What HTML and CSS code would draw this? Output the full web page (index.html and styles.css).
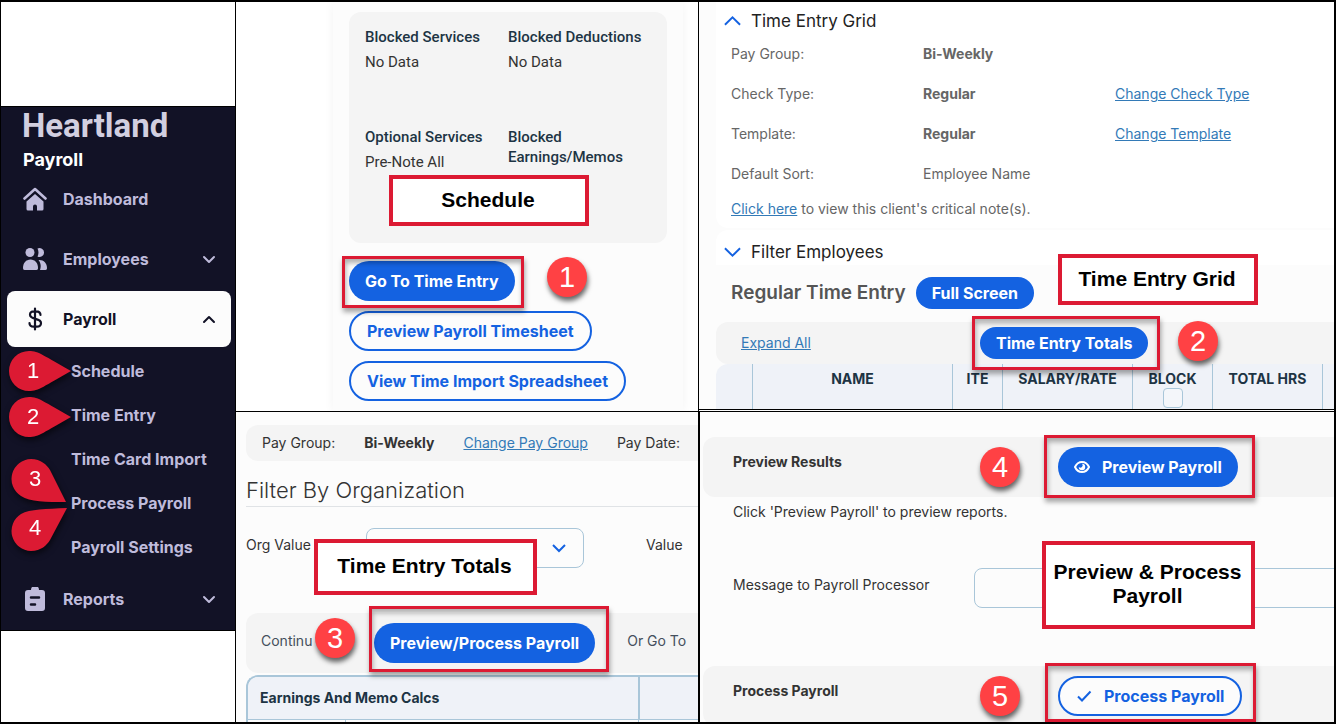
FILE: index.html
```html
<!DOCTYPE html>
<html lang="en">
<head>
    <meta charset="UTF-8">
    <meta name="viewport" content="width=device-width, initial-scale=1.0">
    <title>Heartland Payroll</title>
    <link rel="stylesheet" href="styles.css">
</head>
<body>
    <div class="page">
        <aside class="sidebar">
            <nav class="nav">
                <div class="brand">Heartland</div>
                <div class="product">Payroll</div>
                <ul class="menu">
                    <li>
                        <a class="menu-item" href="#">
                            <svg class="icon" viewBox="0 0 24 24"><path d="M1.500 11.500 12 2l10.500 9.500" fill="none" stroke="currentColor" stroke-width="2.600" stroke-linecap="round" stroke-linejoin="round"/><path d="M12 7 20.500 14.500v7.500a1.500 1.500 0 0 1-1.500 1.500h-5v-4a2 2 0 0 0-4 0v4H5a1.500 1.500 0 0 1-1.500-1.500v-7.500z" fill="currentColor"/></svg>
                            <span>Dashboard</span>
                        </a>
                    </li>
                    <li>
                        <a class="menu-item" href="#">
                            <svg class="icon" viewBox="0 0 24 24"><g fill="currentColor"><circle cx="7" cy="5.500" r="4.500"/><path d="M0 21c0-5 3-8.500 7.500-8.500S15 16 15 21c0 1-.5 2-1.500 2h-12C.5 23 0 22 0 21z"/><path d="M14.500 1.500A4.500 4.500 0 1 1 14.500 9.500C15.800 7 15.800 4 14.500 1.500z"/><path d="M15.500 13c5-.5 8.500 3 8.500 8 0 1-.5 2-1.500 2H17c1.500-4 .5-7.500-1.500-10z"/></g></svg>
                            <span>Employees</span>
                            <svg class="arrow" viewBox="0 0 20 20"><path d="M5 8l5 5 5-5"/></svg>
                        </a>
                    </li>
                    <li>
                        <a class="menu-item active" href="#">
                            <svg class="icon" viewBox="0 0 24 24"><path d="M12 1.500v21M17.500 8c0-2.500-2-3.700-4.500-3.700h-2C8.500 4.300 7 5.800 7 7.800c0 5.400 11 2.700 11 8.200 0 2.200-1.700 3.700-4.300 3.700h-2.900C8.200 19.700 6.500 18.200 6.500 16" fill="none" stroke="currentColor" stroke-width="2.200" stroke-linecap="round"/></svg>
                            <span>Payroll</span>
                            <svg class="arrow" viewBox="0 0 20 20"><path d="M5 13l5-5 5 5"/></svg>
                        </a>
                        <ul class="submenu">
                            <li>
                                <a href="#">Schedule</a>
                                <div class="pin pin-1"><svg viewBox="0 0 62 40"><path d="M20 0C30 0 35 5 62 20 35 35 30 40 20 40A20 20 0 0 1 20 0z"/></svg><span>1</span></div>
                            </li>
                            <li>
                                <a href="#">Time Entry</a>
                                <div class="pin pin-2"><svg viewBox="0 0 62 40"><path d="M20 0C30 0 35 5 62 20 35 35 30 40 20 40A20 20 0 0 1 20 0z"/></svg><span>2</span></div>
                            </li>
                            <li><a href="#">Time Card Import</a></li>
                            <li>
                                <a href="#">Process Payroll</a>
                                <div class="pin pin-3"><svg viewBox="0 0 56 44"><path d="M20 0C30 0 36 6 39 11L55 43C35 43 19 43 10 37A20 20 0 0 1 20 0z"/></svg><span>3</span></div>
                                <div class="pin pin-4"><svg viewBox="0 0 56 44"><path d="M20 43C30 43 36 37 39 32L56 0C35 1 19 1 10 6A20 20 0 0 0 20 43z"/></svg><span>4</span></div>
                            </li>
                            <li><a href="#">Payroll Settings</a></li>
                        </ul>
                    </li>
                    <li>
                        <a class="menu-item" href="#">
                            <svg class="icon" viewBox="0 0 24 24"><path d="M5 3h3a4 4 0 0 1 8 0h3a3 3 0 0 1 3 3v15a3 3 0 0 1-3 3H5a3 3 0 0 1-3-3V6a3 3 0 0 1 3-3z" fill="currentColor"/><path d="M8 10.500h8M8 17.500h4" stroke="#121226" stroke-width="2.500" stroke-linecap="round"/></svg>
                            <span>Reports</span>
                            <svg class="arrow" viewBox="0 0 20 20"><path d="M5 8l5 5 5-5"/></svg>
                        </a>
                    </li>
                </ul>
            </nav>
        </aside>

        <section class="panel schedule">
            <div class="schedule-card">
                <div class="services">
                    <div>
                        <h4>Blocked Services</h4>
                        <p>No Data</p>
                    </div>
                    <div>
                        <h4>Blocked Deductions</h4>
                        <p>No Data</p>
                    </div>
                    <div>
                        <h4>Optional Services</h4>
                        <p>Pre-Note All</p>
                    </div>
                    <div>
                        <h4>Blocked Earnings/Memos</h4>
                    </div>
                </div>
                <div class="step step-1">
                    <button class="btn">Go To Time Entry</button>
                    <div class="frame"></div>
                    <div class="badge">1</div>
                </div>
                <button class="btn outline">Preview Payroll Timesheet</button>
                <button class="btn outline">View Time Import Spreadsheet</button>
            </div>
            <div class="label label-schedule">Schedule</div>
        </section>

        <section class="panel entry">
            <div class="entry-card">
                <h3 class="toggle"><svg viewBox="0 0 18 12"><path d="M1 10l8-8 8 8"/></svg>Time Entry Grid</h3>
                <div class="details">
                    <span>Pay Group:</span><b>Bi-Weekly</b><span></span>
                    <span>Check Type:</span><b>Regular</b><a href="#">Change Check Type</a>
                    <span>Template:</span><b>Regular</b><a href="#">Change Template</a>
                    <span>Default Sort:</span><span>Employee Name</span><span></span>
                </div>
                <p class="note"><a href="#">Click here</a> to view this client's critical note(s).</p>
            </div>
            <div class="entry-card filter">
                <h3 class="toggle"><svg viewBox="0 0 18 12"><path d="M1 2l8 8 8-8"/></svg>Filter Employees</h3>
            </div>
            <div class="entry-title">
                <h2>Regular Time Entry</h2>
                <button class="btn small">Full Screen</button>
            </div>
            <div class="entry-bar">
                <a href="#">Expand All</a>
                <div class="step step-2">
                    <button class="btn small">Time Entry Totals</button>
                    <div class="frame"></div>
                    <div class="badge">2</div>
                </div>
            </div>
            <table class="grid">
                <colgroup>
                    <col class="c-mark"><col class="c-name"><col class="c-ite"><col class="c-rate"><col class="c-block"><col class="c-hrs"><col>
                </colgroup>
                <thead>
                    <tr>
                        <th></th>
                        <th>NAME</th>
                        <th>ITE</th>
                        <th>SALARY/RATE</th>
                        <th><label for="block">BLOCK</label><input type="checkbox" id="block"></th>
                        <th>TOTAL HRS</th>
                        <th></th>
                    </tr>
                </thead>
            </table>
            <div class="label label-entry">Time Entry Grid</div>
        </section>

        <section class="panel totals">
            <div class="group-bar">
                <span>Pay Group:</span>
                <b>Bi-Weekly</b>
                <a href="#">Change Pay Group</a>
                <span>Pay Date:</span>
            </div>
            <h2 class="filter-title">Filter By Organization</h2>
            <div class="org-row">
                <label for="org">Org Value</label>
                <div class="select">
                    <select id="org"><option></option></select>
                    <svg viewBox="0 0 14 10"><path d="M1 1l6 6 6-6"/></svg>
                </div>
                <span>Value</span>
            </div>
            <div class="continue-bar">
                <span>Continu</span>
                <div class="step step-3">
                    <button class="btn">Preview/Process Payroll</button>
                    <div class="frame"></div>
                    <div class="badge">3</div>
                </div>
                <span>Or Go To</span>
            </div>
            <table class="calcs">
                <colgroup>
                    <col class="c-code"><col class="c-calc"><col>
                </colgroup>
                <tr>
                    <th colspan="2">Earnings And Memo Calcs</th>
                    <th></th>
                </tr>
                <tr>
                    <td></td>
                    <td></td>
                    <td></td>
                </tr>
            </table>
            <div class="label label-totals">Time Entry Totals</div>
        </section>

        <section class="panel process">
            <div class="process-bar">
                <h4>Preview Results</h4>
                <div class="step step-4">
                    <button class="btn"><svg viewBox="0 0 16 16"><path d="M1 8c1.500-3.300 4-5 7-5s5.500 1.700 7 5c-1.500 3.300-4 5-7 5s-5.500-1.700-7-5z" fill="none" stroke="currentColor" stroke-width="2"/><path d="M8 4.800A3.200 3.200 0 1 1 4.800 8 2 2 0 0 0 8 4.800z" fill="currentColor"/></svg>Preview Payroll</button>
                    <div class="frame"></div>
                    <div class="badge">4</div>
                </div>
            </div>
            <p class="hint">Click 'Preview Payroll' to preview reports.</p>
            <div class="message">
                <label for="message">Message to Payroll Processor</label>
                <input type="text" id="message">
            </div>
            <div class="process-bar">
                <h4>Process Payroll</h4>
                <div class="step step-5">
                    <button class="btn outline"><svg viewBox="0 0 16 16"><path d="M2 8.500l4 4 8.500-9" fill="none" stroke="currentColor" stroke-width="2"/></svg>Process Payroll</button>
                    <div class="frame"></div>
                    <div class="badge">5</div>
                </div>
            </div>
            <div class="label label-process">Preview &amp; Process Payroll</div>
        </section>
    </div>
</body>
</html>
```
FILE: styles.css
```css
* {
    box-sizing: border-box;
}
body {
    margin: 0;
    font-family: Inter, "Liberation Sans", sans-serif;
    font-size: 14px;
    line-height: 20px;
    color: #333;
    background: #fff;
}
h2, h3, h4, p, ul {
    margin: 0;
    padding: 0;
}
ul {
    list-style: none;
}
a {
    color: #337ab7;
}
.page {
    display: grid;
    grid-template-columns: 235px 462px minmax(0, 1fr);
    grid-template-rows: auto minmax(0, 1fr);
    height: 100vh;
    border: 2px solid #000;
    border-left-width: 1px;
    overflow: hidden;
}
.panel {
    position: relative;
    overflow: hidden;
    background: #fcfcfc;
}

/* sidebar */
.sidebar {
    grid-row: 1 / 3;
    padding-top: 104px;
    border-right: 1px solid #000;
}
.nav {
    padding: 5px 4px 3px 6px;
    background: #121226;
    border-top: 1px solid #000;
    border-bottom: 1px solid #000;
}
.brand {
    padding-left: 15px;
    font-family: Roboto, sans-serif;
    font-size: 33px;
    font-weight: 700;
    line-height: 28px;
    color: #d2cfe0;
}
.product {
    padding: 9px 0 0 16px;
    font-size: 18px;
    font-weight: 700;
    line-height: 22px;
    color: #fff;
}
.menu {
    display: flex;
    flex-direction: column;
    gap: 4px;
}
.menu-item {
    display: flex;
    align-items: center;
    gap: 16px;
    height: 56px;
    padding: 0 12px 0 16px;
    border-radius: 8px;
    font-size: 16px;
    font-weight: 700;
    color: #bfbbdb;
    text-decoration: none;
}
.menu-item.active {
    background: #fcfcfc;
    color: #121226;
}
.icon {
    width: 24px;
    height: 24px;
}
.arrow {
    width: 20px;
    height: 20px;
    margin-left: auto;
}
.arrow path {
    fill: none;
    stroke: currentColor;
    stroke-width: 2;
    stroke-linecap: round;
    stroke-linejoin: round;
}
.submenu {
    margin-bottom: -2px;
    padding: 2px 0 0;
}
.submenu li {
    position: relative;
    padding-left: 64px;
}
.submenu a {
    display: block;
    font-size: 16px;
    font-weight: 700;
    line-height: 44px;
    color: #bfbbdb;
    text-decoration: none;
}
.pin {
    position: absolute;
    left: 2px;
    width: 62px;
    height: 40px;
    filter: drop-shadow(1px 3px 3px rgba(0, 0, 0, 0.6));
}
.pin svg {
    display: block;
    width: 100%;
    height: 100%;
    fill: #dc1a33;
}
.pin span {
    position: absolute;
    left: 0;
    top: 0;
    width: 48px;
    font-family: "Liberation Sans", sans-serif;
    font-size: 22px;
    line-height: 40px;
    text-align: center;
    color: #fff;
}
.pin-1 {
    top: 2px;
}
.pin-2 {
    top: 4px;
}
.pin-3, .pin-4 {
    left: 4px;
    width: 56px;
    height: 44px;
}
.pin-3 {
    top: -22px;
}
.pin-4 {
    top: 27px;
}

/* callouts */
.step {
    position: relative;
}
.frame {
    position: absolute;
    border: 3px solid #dc1a33;
    box-shadow: 1px 4px 5px rgba(0, 0, 0, 0.35), inset 1px 4px 5px rgba(0, 0, 0, 0.3);
    pointer-events: none;
}
.badge {
    position: absolute;
    width: 40px;
    height: 40px;
    border-radius: 50%;
    background: #ff4144;
    box-shadow: 1px 4px 5px rgba(0, 0, 0, 0.6);
    font-family: "Liberation Sans", sans-serif;
    font-size: 29px;
    line-height: 40px;
    text-align: center;
    color: #fff;
}
.label {
    position: absolute;
    display: flex;
    align-items: center;
    justify-content: center;
    padding: 0 2px 2px 0;
    border: 4px solid #dc1a33;
    background: #fff;
    font-family: "Liberation Sans", sans-serif;
    font-size: 21px;
    font-weight: 700;
    line-height: 24px;
    text-align: center;
    color: #000;
}
.step-1 .frame {
    inset: -5px -9px -7px -7px;
}
.step-1 .badge {
    left: 198px;
    top: -4px;
}
.step-2 .frame {
    inset: -11px -12px -11px -8px;
}
.step-2 .badge {
    left: 198px;
    top: -6px;
}
.step-3 .frame {
    inset: -17px -14px -9px -5px;
}
.step-3 .badge {
    left: -59px;
    top: -5px;
}
.step-4 .frame {
    inset: -12px -17px -11px -14px;
}
.step-5 .frame {
    inset: -13px -14px -6px -13px;
}
.step-4 .badge, .step-5 .badge {
    left: -78px;
    top: 0;
}
.label-schedule {
    left: 153px;
    top: 173px;
    width: 200px;
    height: 51px;
}
.label-entry {
    left: 359px;
    top: 252px;
    width: 200px;
    height: 51px;
}
.label-totals {
    left: 78px;
    top: 127px;
    width: 223px;
    height: 56px;
}
.label-process {
    left: 342px;
    top: 129px;
    width: 213px;
    height: 88px;
}

/* buttons */
.btn {
    display: inline-flex;
    align-items: center;
    gap: 12px;
    height: 40px;
    padding: 0 16px;
    border: none;
    border-radius: 20px;
    background: #1462e1;
    font-family: inherit;
    font-size: 16px;
    font-weight: 700;
    color: #fff;
    white-space: nowrap;
    cursor: pointer;
}
.btn.outline {
    border: 2px solid #1462e1;
    background: #fcfcfc;
    color: #1462e1;
}
.btn.small {
    height: 32px;
}
.btn svg {
    width: 16px;
    height: 16px;
}

/* schedule */
.schedule {
    background: #fff;
    border-bottom: 1px solid #000;
}
.schedule-card {
    display: flex;
    flex-direction: column;
    align-items: flex-start;
    gap: 10px;
    margin: 0 15px 0 97px;
    padding: 10px 16px;
    background: #fcfcfc;
    box-shadow: 0 0 10px rgba(0, 0, 0, 0.05);
}
.services {
    display: grid;
    grid-template-columns: 1fr 1fr;
    grid-auto-rows: 100px;
    width: 100%;
    margin-bottom: 8px;
    padding: 15px 16px 16px;
    border-radius: 12px;
    background: #f4f4f4;
    font-family: Roboto, sans-serif;
    font-size: 15px;
}
.services h4 {
    font-size: 15px;
    font-weight: 500;
    color: #1d3444;
}
.services p {
    padding-top: 5px;
}

/* time entry grid */
.entry {
    padding-left: 17px;
    border-left: 1px solid #000;
    border-bottom: 3px double #000;
}
.entry-card {
    padding: 9px 0 9px 8px;
    border-radius: 0 0 0 12px;
    background: #fff;
    color: #666;
}
.entry-card.filter {
    margin-top: 2px;
    padding: 12px 0 3px 8px;
    border-radius: 12px 0 0 0;
}
.toggle {
    display: flex;
    align-items: center;
    gap: 10px;
    font-size: 17px;
    font-weight: 400;
    color: #222;
}
.toggle svg {
    width: 17px;
    height: 12px;
    fill: none;
    stroke: #1462e1;
    stroke-width: 2;
}
.details {
    display: grid;
    grid-template-columns: 192px 192px 1fr;
    margin: 3px 0 5px;
    padding-left: 7px;
    line-height: 40px;
}
.note {
    padding-left: 7px;
}
.entry-title {
    display: flex;
    align-items: center;
    gap: 10px;
    margin: 12px 0 13px;
    padding-left: 15px;
}
.entry-title h2 {
    font-size: 19px;
    font-weight: 600;
    color: #555;
}
.entry-bar {
    display: grid;
    grid-template-columns: 239px auto;
    align-items: center;
    justify-content: start;
    padding: 5px 0 5px 25px;
    border-radius: 12px 0 0 12px;
    background: #f4f4f4;
}
.step .btn {
    display: flex;
}
.grid {
    width: 100%;
    table-layout: fixed;
    border-collapse: separate;
    border-spacing: 0;
}
.grid th {
    height: 45px;
    padding: 5px 0 0;
    border-left: 1px solid #a9c6d9;
    background: #eff2f8;
    font-weight: 700;
    color: #1d3444;
    vertical-align: top;
}
.grid th:first-child {
    border-left: none;
    border-radius: 12px 0 0 0;
}
.grid label {
    display: block;
    line-height: 19px;
}
.grid input {
    display: block;
    appearance: none;
    width: 20px;
    height: 20px;
    margin: 0 auto;
    border: 1px solid #a9c6d9;
    border-radius: 4px;
    background: #f4f6fa;
}
.c-mark {
    width: 36px;
}
.c-name {
    width: 200px;
}
.c-ite {
    width: 50px;
}
.c-rate {
    width: 130px;
}
.c-block {
    width: 80px;
}
.c-hrs {
    width: 110px;
}

/* time entry totals */
.totals {
    padding: 13px 0 0 10px;
}
.group-bar {
    display: flex;
    gap: 29px;
    padding: 8px 0 8px 16px;
    border-radius: 12px 0 0 12px;
    background: #f4f4f4;
    white-space: nowrap;
}
.filter-title {
    padding: 17px 0 3px;
    border-bottom: 1px solid #e0e3e6;
    font-size: 22px;
    font-weight: 300;
    line-height: 25px;
}
.org-row {
    display: grid;
    grid-template-columns: 120px 218px auto;
    margin: 21px 0 45px;
    line-height: 34px;
}
.org-row > span {
    padding-left: 62px;
}
.select {
    position: relative;
}
.select select {
    display: block;
    appearance: none;
    width: 100%;
    height: 40px;
    border: 1px solid #a9c6d9;
    border-radius: 8px;
    background: #fcfcfc;
}
.select svg {
    position: absolute;
    right: 18px;
    top: 16px;
    width: 14px;
    height: 10px;
    fill: none;
    stroke: #1462e1;
    stroke-width: 2;
}
.continue-bar {
    display: grid;
    grid-template-columns: 113px auto auto;
    justify-content: start;
    padding: 10px 0 10px 15px;
    border-radius: 12px 0 0 12px;
    background: #f4f4f4;
    line-height: 36px;
    color: #444f5c;
    white-space: nowrap;
}
.continue-bar > span:last-child {
    padding-left: 32px;
}
.calcs {
    width: 100%;
    margin-top: 2px;
    table-layout: fixed;
    border: 2px solid #a9c6d9;
    border-right: none;
    border-radius: 12px 0 0 0;
    border-spacing: 0;
}
.calcs th {
    height: 43px;
    padding: 0 0 0 12px;
    border-bottom: 1px solid #a9c6d9;
    background: #eff2f8;
    font-weight: 700;
    color: #1d3444;
    text-align: left;
}
.calcs th:first-child {
    border-radius: 10px 0 0 0;
}
.calcs th + th {
    border-left: 2px solid #a9c6d9;
}
.calcs td {
    height: 40px;
}
.calcs td + td {
    border-left: 1px solid #a9c6d9;
}
.c-code {
    width: 97px;
}
.c-calc {
    width: 293px;
}

/* preview and process payroll */
.process {
    padding: 25px 0 0 3px;
    border-left: 2px solid #000;
}
.process-bar {
    display: grid;
    grid-template-columns: 325px auto;
    align-items: start;
    justify-content: start;
    padding: 10px 0 10px 30px;
    border-radius: 12px 0 0 12px;
    background: #f4f4f4;
}
.process-bar h4 {
    padding-top: 5px;
    font-size: 14px;
    font-weight: 700;
}
.hint {
    padding: 5px 0 0 30px;
}
.message {
    display: grid;
    grid-template-columns: 241px 1fr;
    margin: 46px -12px 58px 0;
    padding-left: 30px;
    line-height: 34px;
}
.message input {
    height: 40px;
    border: 1px solid #a9c6d9;
    border-radius: 8px;
    background: #fcfcfc;
}
```
